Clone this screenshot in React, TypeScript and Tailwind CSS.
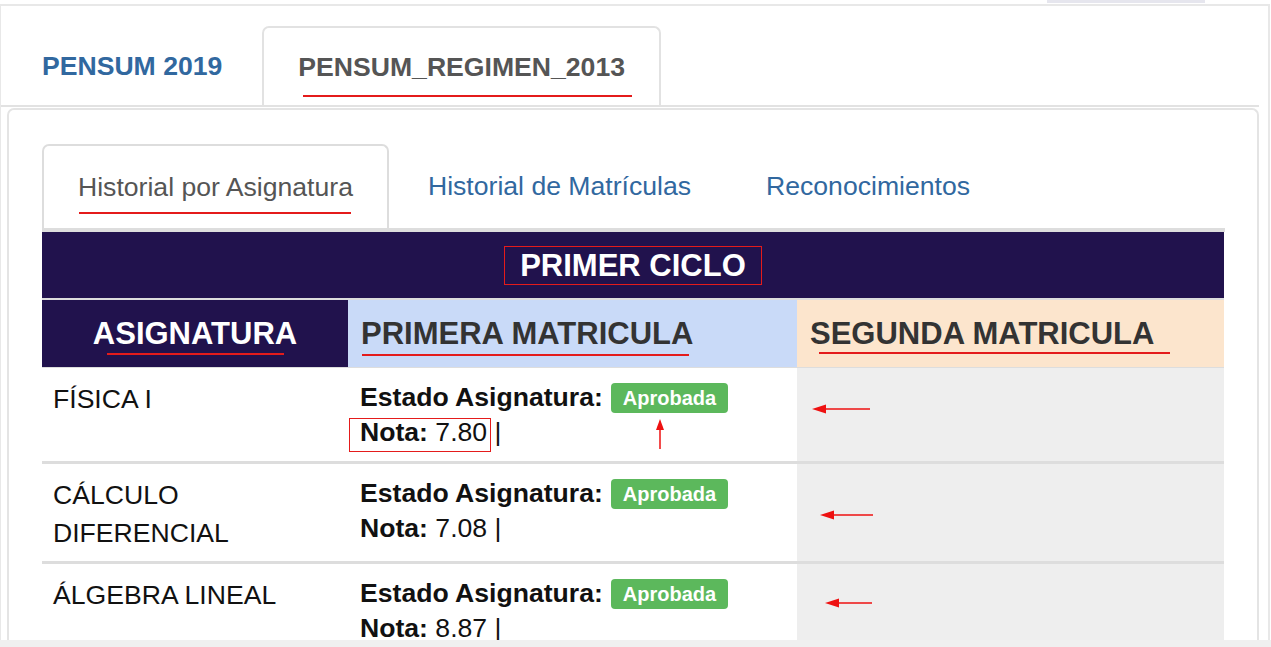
import React from 'react';

type Row = {
  name: string[];
  nota: string;
  boxed?: boolean;
  upArrow?: boolean;
  arrowMl: string;
  arrowMt: string;
  arrowW: number;
};

const rows: Row[] = [
  { name: ['FÍSICA I'], nota: '7.80', boxed: true, upArrow: true, arrowMl: 'ml-[15px]', arrowMt: 'mt-[35px]', arrowW: 58 },
  { name: ['CÁLCULO', 'DIFERENCIAL'], nota: '7.08', arrowMl: 'ml-[23px]', arrowMt: 'mt-[45px]', arrowW: 53 },
  { name: ['ÁLGEBRA LINEAL'], nota: '8.87', arrowMl: 'ml-[28px]', arrowMt: 'mt-[33px]', arrowW: 47 },
];

function LeftArrow({ w }: { w: number }) {
  return (
    <svg width={w} height="12" viewBox={`0 0 ${w} 12`}>
      <line x1="12" y1="6" x2={w} y2="6" stroke="#ee1111" strokeWidth="1.5" />
      <polygon points="0,6 14,1.5 14,10.5" fill="#ee1111" />
    </svg>
  );
}

export default function App() {
  return (
    <div className="h-[647px] w-[1271px] flex flex-col bg-white overflow-hidden font-['Liberation_Sans',Arial,sans-serif]">
      {/* top strip */}
      <div className="h-[4px] flex">
        <div className="ml-[1047px] w-[158px] h-[3px] bg-[#e6e6ee]"></div>
      </div>

      <div className="flex-1 min-h-0 w-[1270px] border-t-2 border-l border-r-2 border-[#e8e8e8] pr-[9px] overflow-hidden">
        {/* Outer tabs */}
        <div className="flex items-end pt-[20px] pl-[5px] border-b-2 border-[#e2e2e2]">
          <div className="h-[79px] flex items-center px-[36px] text-[26.6px] leading-[36px] font-bold text-[#31689f]">
            PENSUM 2019
          </div>
          <div className="ml-[4px] h-[79px] flex items-center px-[34px] text-[26.6px] leading-[36px] font-bold text-[#555555] border-2 border-b-0 border-[#e2e2e2] rounded-t-[7px] bg-white">
            <span className="relative">
              PENSUM_REGIMEN_2013
              <span className="absolute left-[5px] top-[46px] w-[329px] h-[2px] bg-[#e41b1b]"></span>
            </span>
          </div>
        </div>

        {/* Inner panel */}
        <div className="ml-[6px] mt-[1px] h-full border-2 border-b-0 border-[#e4e4e4] rounded-t-[7px] pl-[33px] pr-[32px] pt-[34px]">
          {/* Inner tabs */}
          <div className="flex items-end border-b-4 border-[#dddddd]">
            <div className="h-[84px] flex items-center px-[34px] border-2 border-b-0 border-[#dddddd] rounded-t-[7px] text-[26.6px] leading-[36px] text-[#555555]">
              <span className="relative">
                Historial por Asignatura
                <span className="absolute left-[1px] top-[43px] w-[272px] h-[2px] bg-[#e41b1b]"></span>
              </span>
            </div>
            <div className="ml-[3px] h-[84px] flex items-center px-[36px] text-[26.6px] leading-[36px] text-[#31689f]">
              Historial de Matrículas
            </div>
            <div className="ml-[3px] h-[84px] flex items-center px-[36px] text-[26.6px] leading-[36px] text-[#31689f]">
              Reconocimientos
            </div>
          </div>

          {/* Table */}
          <div className="w-[1182px]">
            <div className="h-[66px] bg-[#21124d] flex items-center justify-center">
              <span className="border-[1.5px] border-[#e41b1b] px-[15px] leading-[37px] text-[31px] font-bold text-white">
                PRIMER CICLO
              </span>
            </div>
            <div className="flex border-t-2 border-[#dddddd] h-[69px]">
              <div className="w-[306px] bg-[#21124d] flex items-center justify-center text-[31px] leading-[36px] font-bold text-white">
                <span className="relative">
                  ASIGNATURA
                  <span className="absolute left-[14px] top-[37px] w-[177px] h-[2px] bg-[#e41b1b]"></span>
                </span>
              </div>
              <div className="w-[449px] bg-[#c9daf8] flex items-center pl-[13px] text-[31px] leading-[36px] font-bold text-[#333333]">
                <span className="relative">
                  PRIMERA MATRICULA
                  <span className="absolute left-[1px] top-[38px] w-[327px] h-[2px] bg-[#e41b1b]"></span>
                </span>
              </div>
              <div className="flex-1 bg-[#fce5cd] flex items-center pl-[13px] text-[31px] leading-[36px] font-bold text-[#333333]">
                <span className="relative">
                  SEGUNDA MATRICULA
                  <span className="absolute left-[9px] top-[36px] w-[351px] h-[2px] bg-[#e41b1b]"></span>
                </span>
              </div>
            </div>

            {rows.map((r, i) => (
              <div key={i} className={`flex ${i === 0 ? 'border-t-[1px]' : 'border-t-[3px]'} border-[#dddddd]`}>
                <div className="w-[306px] pl-[11px] pt-[12px] pb-[9px] text-[26.6px] leading-[38px] text-[#111111]">
                  {r.name.map((n) => (
                    <div key={n}>{n}</div>
                  ))}
                </div>
                <div className="w-[449px] pl-[12px] pt-[12px] pb-[11px] text-[26.6px] leading-[35px] text-[#111111]">
                  <div className="flex items-center">
                    <span className="font-bold">Estado Asignatura:</span>
                    <span className="relative ml-[8px] h-[30px] px-[12px] rounded-[4px] bg-[#5cb85c] text-white text-[20px] leading-[30px] font-bold">
                      Aprobada
                      {r.upArrow && (
                        <svg className="absolute left-[44px] top-[36px]" width="10" height="30" viewBox="0 0 10 30">
                          <line x1="5" y1="8" x2="5" y2="30" stroke="#ee1111" strokeWidth="1.5" />
                          <polygon points="5,0 1,11 9,11" fill="#ee1111" />
                        </svg>
                      )}
                    </span>
                  </div>
                  <div>
                    <span className="relative">
                      <span className="font-bold">Nota:</span> {r.nota}
                      {r.boxed && (
                        <span className="absolute left-[-11px] top-[1px] w-[142px] h-[34px] border-[1.5px] border-[#e41b1b]"></span>
                      )}
                    </span>{' '}
                    |
                  </div>
                </div>
                <div className="flex-1 bg-[#eeeeee] flex items-start">
                  <div className={`${r.arrowMl} ${r.arrowMt} flex`}>
                    <LeftArrow w={r.arrowW} />
                  </div>
                </div>
              </div>
            ))}
          </div>
        </div>
      </div>

      <div className="h-[7px] bg-[#f0f0f0]"></div>
    </div>
  );
}
